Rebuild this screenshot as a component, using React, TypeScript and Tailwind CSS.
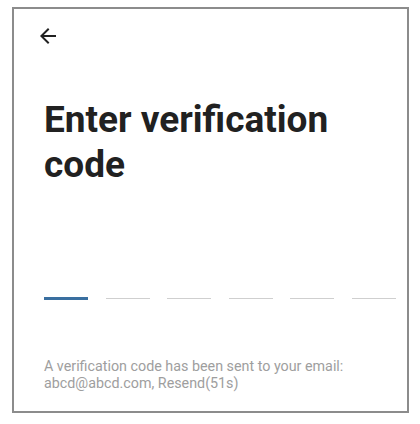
import React from "react";

export default function App() {
  const dashes = [0, 1, 2, 3, 4, 5];
  return (
    <div className="w-[420px] h-[424px] bg-white pt-[7px] pl-[12px]" style={{ fontFamily: "Roboto, 'Liberation Sans', sans-serif" }}>
      <div className="w-[397px] h-[406px] border-2 border-[#8c8c8c] bg-white flex flex-col pl-[30px] pt-[15px]">
        <button className="w-6 h-6 -ml-2 text-[#212121]">
          <svg viewBox="0 0 24 24" width="24" height="24" fill="currentColor">
            <path d="M20 11H7.83l5.59-5.59L12 4l-8 8 8 8 1.41-1.41L7.83 13H20v-2z" />
          </svg>
        </button>
        <h1 className="mt-[49px] text-[37px] leading-[45px] font-bold text-[#212121] w-[330px]">
          Enter verification code
        </h1>
        <div className="mt-[110px] flex gap-[17.6px] items-center h-[3px]">
          {dashes.map((i) => (
            <div
              key={i}
              className={i === 0 ? "w-[44px] h-[3px] bg-[#3a6fa0]" : "w-[44px] h-px bg-[#cfcfcf]"}
            />
          ))}
        </div>
        <p className="mt-[58px] text-[14.3px] leading-[16.5px] text-[#9e9e9e]">
          A verification code has been sent to your email:
          <br />
          abcd@abcd.com, Resend(51s)
        </p>
      </div>
    </div>
  );
}
